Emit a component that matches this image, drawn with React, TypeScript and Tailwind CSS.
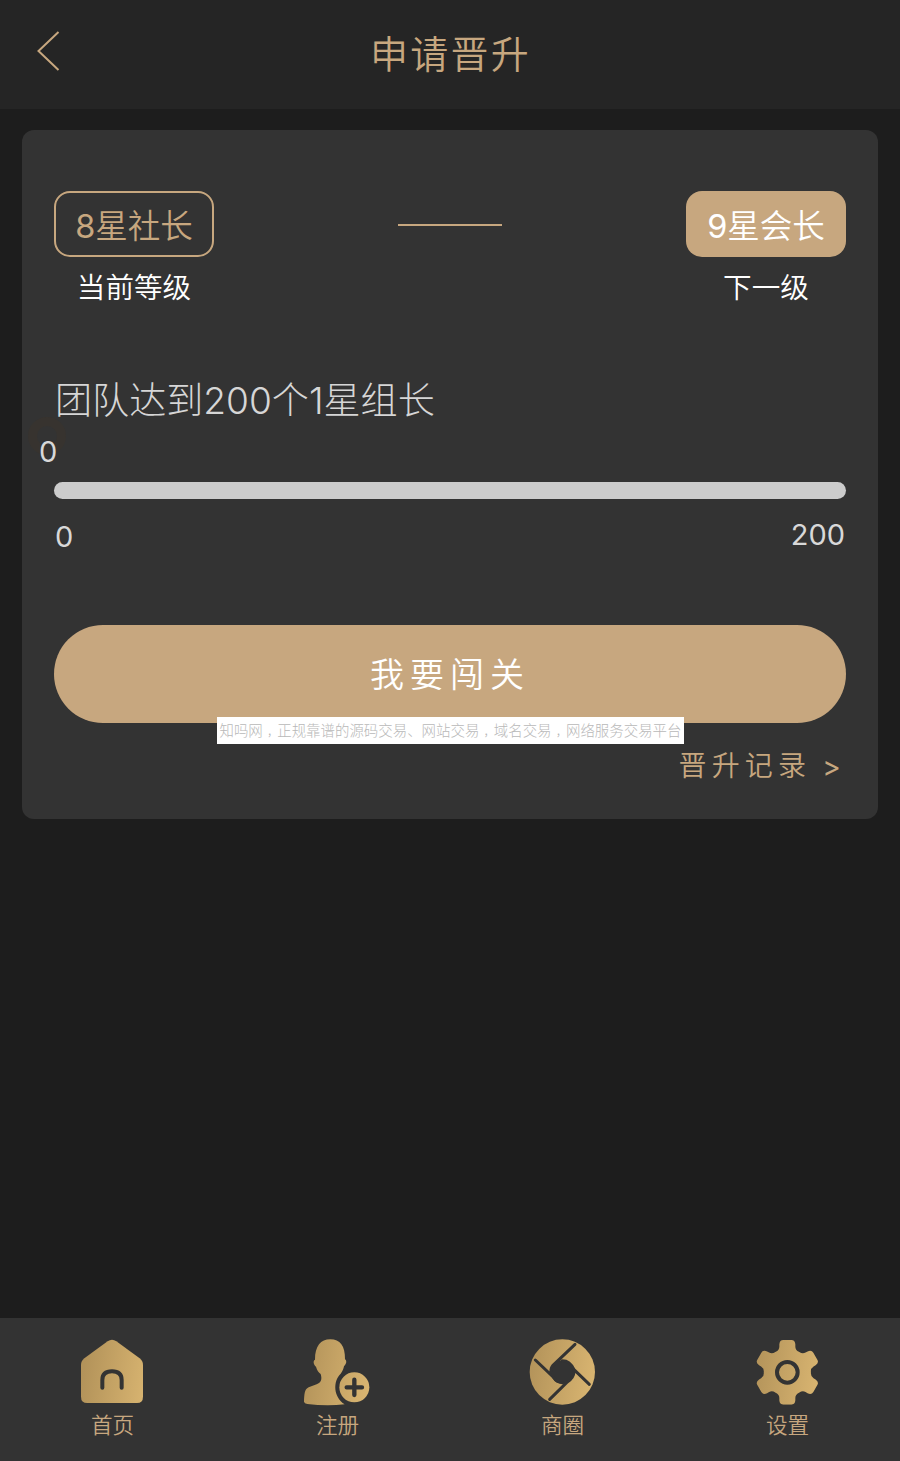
import type { ReactNode } from 'react';

const WATERMARK = '知吗网，正规靠谱的源码交易、网站交易，域名交易，网络服务交易平台';

function NavItem({ label, viewBox, id, children }: { label: string; viewBox: string; id: string; children: ReactNode }) {
  return (
    <a className="flex flex-1 flex-col items-center pt-[18px]">
      <svg className="h-[72px] w-[72px]" viewBox={viewBox} fill={`url(#${id})`}>
        <defs>
          <linearGradient id={id} x1="70" y1="180" x2="270" y2="210" gradientUnits="userSpaceOnUse">
            <stop offset="0" stopColor="#b3935a" />
            <stop offset="1" stopColor="#d9b571" />
          </linearGradient>
        </defs>
        {children}
      </svg>
      <span className="pt-px text-[21.6px] leading-[32px] font-[350] text-[#c7a77f]">{label}</span>
    </a>
  );
}

function Level({ badge, caption, active }: { badge: string; caption: string; active?: boolean }) {
  return (
    <div className="flex w-[160px] flex-col items-center">
      <div
        className={
          active
            ? 'flex h-[66px] w-full items-center justify-center rounded-[16px] bg-[#c7a77f] text-white'
            : 'flex h-[66px] w-full items-center justify-center rounded-[16px] border-2 border-[#c7a77f] text-[#c7a77f]'
        }
      >
        <span className="pt-[5px] text-[32.5px] leading-[40px] font-[350]">
          <span className="font-normal">{badge.slice(0, 1)}</span>
          {badge.slice(1)}
        </span>
      </div>
      <span className="mt-[11px] text-[28.6px] leading-[40px] font-[350] text-white">{caption}</span>
    </div>
  );
}

export default function App() {
  return (
    <div className="flex h-[1461px] w-[900px] flex-col overflow-hidden bg-[#1d1d1d] font-[Inter,'Noto_Sans_CJK_SC',sans-serif]">
      <header className="grid h-[109px] shrink-0 grid-cols-[100px_1fr_100px] items-center bg-[#252525]">
        <svg className="mb-[7px] ml-[36px] h-[42px] w-[26px]" viewBox="0 0 26 42" fill="none" stroke="#c7a77f" strokeWidth="2">
          <path d="M22.5 2 2.5 21 22.5 40" />
        </svg>
        <h1 className="pb-[2px] pl-px text-center text-[38px] leading-[56px] font-[350] tracking-[2.2px] text-[#c7a77f]">申请晋升</h1>
      </header>

      <main className="flex-1 px-[22px] pt-[21px]">
        <section className="relative flex h-[689px] flex-col rounded-[12px] bg-[#333333] px-[32px] pt-[61px]">
          <div className="flex justify-between">
            <Level badge="8星社长" caption="当前等级" />
            <div className="mt-[33px] h-[2px] w-[104px] bg-[#c7a77f]" />
            <Level badge="9星会长" caption="下一级" active />
          </div>

          <div className="absolute top-[287px] left-[6px] h-[38px] w-[38px] rounded-full border-[9px] border-[#37332f]" />

          <p className="mt-[66px] pl-px text-[37.1px] leading-[54px] font-light whitespace-nowrap text-[#d6d6d6]">团队达到200个1星组长</p>
          <span className="relative mt-[6px] ml-[-15px] text-[29px] leading-[36px] text-[#d8d8d8]">0</span>
          <div className="mt-[12px] h-[17px] shrink-0 rounded-full bg-[#cccccc]" />
          <div className="mt-[18px] flex justify-between px-px text-[29px] leading-[36px] text-[#d8d8d8]">
            <span className="pt-[2px]">0</span>
            <span>200</span>
          </div>

          <button className="mt-[70px] h-[98px] shrink-0 rounded-full bg-[#c7a77f] pt-[2px] text-[34px] leading-[50px] font-[350] tracking-[6px] text-white">
            我要闯关
          </button>
          <a className="mt-[23px] flex justify-end text-[28px] leading-[40px] font-[350] tracking-[5.2px] text-[#c7a77f]">
            <span>晋升记录</span>
            <span className="ml-[11px] pt-px font-normal">&gt;</span>
          </a>

          <div className="absolute top-[587px] left-[195px] h-[27px] w-[467px] bg-white text-center text-[14.45px] leading-[27px] font-light whitespace-nowrap text-[#b8b8b8]">
            {WATERMARK.split('，').map((part, i) => (
              <span key={i}>
                {i > 0 && <span className="pl-[4.45px] text-[10px] leading-none font-normal">，</span>}
                {part}
              </span>
            ))}
          </div>
        </section>
      </main>

      <nav className="flex h-[143px] shrink-0 bg-[#333333]">
        <NavItem label="首页" viewBox="51 78 216 216" id="gold-home">
          <path d="M143 94Q156 85 169 94L239 145Q249 153 249 165V260Q249 279 231 279H82Q63 279 63 260V165Q63 153 73 145Z" />
          <path d="M127 233V210Q127 184 156 184T185 210V233" fill="none" stroke="#333333" strokeWidth="12" strokeLinecap="round" />
        </NavItem>
        <NavItem label="注册" viewBox="66 77 216 216" id="gold-user">
          <path d="M151 87C122 87 105 107 105 148C98 151 101 164 108 169C111 180 116 186 122 191C127 208 123 216 110 222L86 231C73 237 73 253 72 274Q73 280 82 281Q140 288 194 282C160 260 158 213 182 190C188 182 190 176 192 168C200 161 201 151 195 147C196 107 180 87 151 87Z" />
          <circle cx="223" cy="231" r="45" />
          <path d="M200 231H246M223 208V254" fill="none" stroke="#333333" strokeWidth="13" strokeLinecap="round" />
        </NavItem>
        <NavItem label="商圈" viewBox="66 77 216 216" id="gold-circle">
          <circle cx="172" cy="185" r="98" />
          <circle cx="172" cy="185" r="35" fill="#333333" />
          <path d="M210 102 144 165Q137 173 138 185M91 149 146 201Q154 216 172 217M134 267 187 215Q206 203 207 185M253 222 207 178Q195 151 172 151" fill="none" stroke="#333333" strokeWidth="9" strokeLinecap="round" />
        </NavItem>
        <NavItem label="设置" viewBox="66 78 216 216" id="gold-gear">
          <clipPath id="gear-shape">
            {[0, 60, 120, 180, 240, 300].map((angle) => (
              <path
                key={angle}
                d="M136 126Q148 121 148 110V103Q149 90 160 90H184Q195 90 196 103V110Q196 121 208 126L173 189H171Z"
                transform={`rotate(${angle} 172 187)`}
              />
            ))}
            <circle cx="172" cy="187" r="70" />
          </clipPath>
          <rect x="60" y="80" width="220" height="214" clipPath="url(#gear-shape)" />
          <circle cx="172" cy="187" r="31" fill="none" stroke="#333333" strokeWidth="12" />
        </NavItem>
      </nav>
    </div>
  );
}
